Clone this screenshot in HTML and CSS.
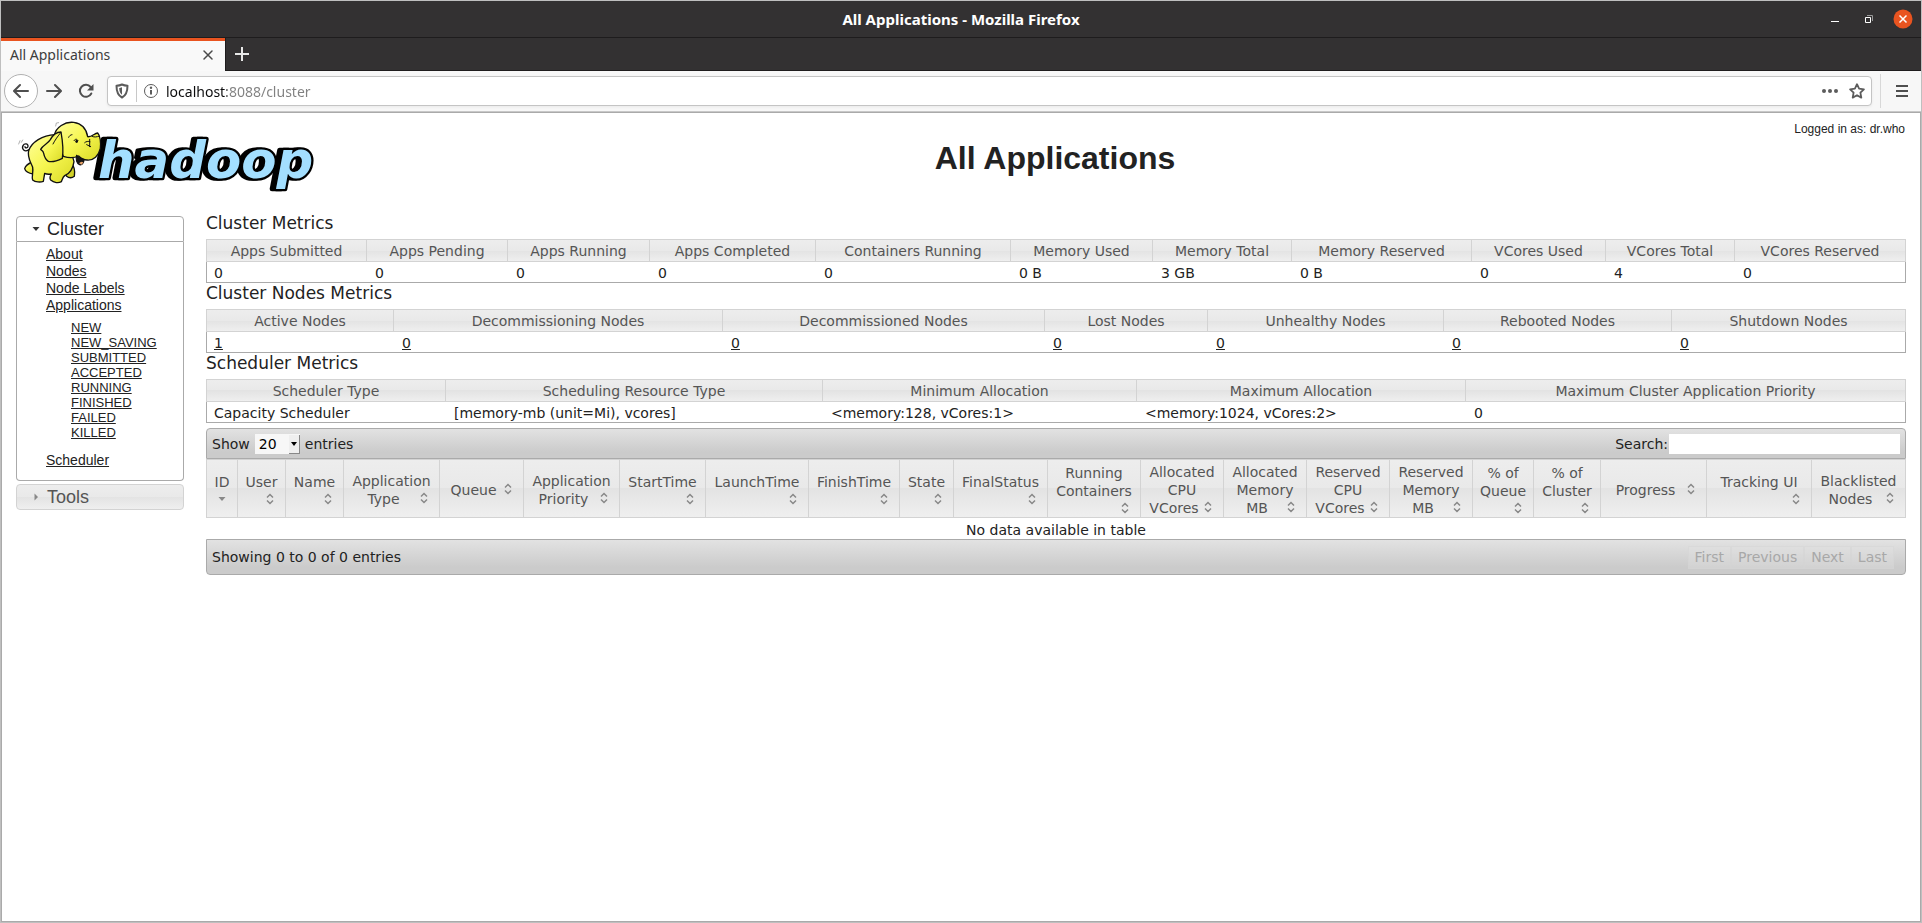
FILE: index.html
```html
<!DOCTYPE html>
<html lang="en">
<head>
  <meta charset="UTF-8">
  <meta name="viewport" content="width=device-width, initial-scale=1.0">
  <title>All Applications</title>
  <link rel="stylesheet" href="styles.css">
</head>
<body>
  <!-- shared icons -->
  <svg class="sprite" width="0" height="0" aria-hidden="true">
    <symbol id="sort-both" viewBox="0 0 16 16">
      <path d="M5 6.5 8 3.5l3 3M5 9.5l3 3 3-3" fill="none" stroke="#888" stroke-width="1.5"/>
    </symbol>
    <symbol id="sort-desc" viewBox="0 0 16 16">
      <path d="M4.5 6h7L8 10z" fill="#888"/>
    </symbol>
  </svg>

  <div class="window">
    <div class="titlebar">
      <span class="window-title">All Applications - Mozilla Firefox</span>
      <div class="window-controls">
        <button type="button" aria-label="Minimize">
          <svg width="20" height="20" viewBox="0 0 20 20"><path d="M6 12.5h8" stroke="#fff"/></svg>
        </button>
        <button type="button" aria-label="Restore">
          <svg width="20" height="20" viewBox="0 0 20 20" fill="none"><path d="M8 6.500h5.500V12" stroke="#999"/><path d="M6.500 8.500h5v5h-5z" stroke="#fff"/></svg>
        </button>
        <button type="button" aria-label="Close">
          <svg width="20" height="20" viewBox="0 0 20 20"><circle cx="10" cy="10" r="9.500" fill="#e95420"/><path d="M6.500 6.500l7 7m0-7l-7 7" stroke="#fff" stroke-width="1.500"/></svg>
        </button>
      </div>
    </div>

    <div class="tabstrip">
      <div class="tab">
        <span>All Applications</span>
        <button type="button" aria-label="Close tab">
          <svg width="12" height="12" viewBox="0 0 12 12"><path d="M2 2l8 8m0-8l-8 8" stroke="#4a4a4a" stroke-width="1.500" stroke-linecap="round"/></svg>
        </button>
      </div>
      <button type="button" class="new-tab" aria-label="New tab">
        <svg width="16" height="16" viewBox="0 0 16 16"><path d="M8 1v14M1 8h14" stroke="#e8e8e8" stroke-width="2"/></svg>
      </button>
    </div>

    <div class="toolbar">
      <button type="button" class="nav-back" aria-label="Back">
        <svg width="16" height="16" viewBox="0 0 16 16"><path d="M15 8H1.500M7 2L1 8l6 6" fill="none" stroke="#4f4f4f" stroke-width="2" stroke-linecap="round" stroke-linejoin="round"/></svg>
      </button>
      <button type="button" class="nav-button" aria-label="Forward">
        <svg width="16" height="16" viewBox="0 0 16 16"><path d="M1 8h13.500M9 2l6 6-6 6" fill="none" stroke="#4f4f4f" stroke-width="2" stroke-linecap="round" stroke-linejoin="round"/></svg>
      </button>
      <button type="button" class="nav-button" aria-label="Reload">
        <svg width="16" height="16" viewBox="0 0 16 16"><path d="M12.600 4A6 6 0 1 0 13.300 10.500" fill="none" stroke="#4f4f4f" stroke-width="2" stroke-linecap="round"/><path d="M15.500 1v6.500H9z" fill="#4f4f4f"/></svg>
      </button>
      <div class="urlbar">
        <svg width="16" height="16" viewBox="0 0 16 16"><path d="M8 1.500c2 1 3.500 1.200 5.500 1.200 0 5.300-.8 9.300-5.500 11.800C3.300 12 2.500 8 2.500 2.700 4.500 2.700 6 2.500 8 1.500z" fill="none" stroke="#5c5c5c" stroke-width="2" stroke-linejoin="round"/><path d="M8 4.300c-1.200.6-2 .7-2.800.8.100 3.200.8 5.200 2.800 6.700z" fill="#5c5c5c"/></svg>
        <span class="urlbar-line"></span>
        <svg width="16" height="16" viewBox="0 0 16 16"><circle cx="8" cy="8" r="6.500" fill="none" stroke="#5c5c5c"/><path d="M8 7v4.500" stroke="#5c5c5c" stroke-width="2"/><circle cx="8" cy="4.700" r="1.200" fill="#5c5c5c"/></svg>
        <input type="text" class="url" aria-label="Address" value="localhost:8088/cluster">
        <svg width="18" height="16" viewBox="0 0 18 16" fill="#5c5c5c"><circle cx="3" cy="8" r="2"/><circle cx="9" cy="8" r="2"/><circle cx="15" cy="8" r="2"/></svg>
        <svg class="star" width="16" height="16" viewBox="0 0 16 16"><path d="M8 1.200l2.100 4.500 4.800.6-3.500 3.400.9 4.900L8 12.200l-4.300 2.400.9-4.900L1.100 6.300l4.800-.6z" fill="none" stroke="#5c5c5c" stroke-width="1.800" stroke-linejoin="round"/></svg>
      </div>
      <span class="toolbar-line"></span>
      <button type="button" class="nav-button" aria-label="Open menu">
        <svg width="14" height="14" viewBox="0 0 14 14"><path d="M1 2h12M1 7h12M1 12h12" stroke="#4f4f4f" stroke-width="2"/></svg>
      </button>
    </div>

    <div class="page">
      <header class="header">
        <svg class="logo" width="320" height="89" viewBox="0 3 960 267" role="img" aria-label="hadoop">
          <defs>
            <linearGradient id="skin" x1="0" y1="0" x2="1" y2="1">
              <stop offset="0" stop-color="#ffff9c"/>
              <stop offset=".5" stop-color="#f6f650"/>
              <stop offset="1" stop-color="#d9d926"/>
            </linearGradient>
          </defs>
          <text class="wordmark" x="264" y="199">hadoop</text>
          <g fill="url(#skin)" stroke="#111" stroke-width="4" stroke-linejoin="round" stroke-linecap="round">
            <path d="M56 113C44 122 34 111 39 101c4-8 16-7 15 2 0 6-9 6-9 1" fill="none"/>
            <path d="M182 152c12 10 13 28 11 41-8 6-18 4-24-1l-10-26z" fill="#d2d228"/>
            <path d="M68 150c-12 4-22 12-24 20 2 8 12 14 26 16z"/>
            <path d="M135 68c-38 2-70 22-79 48-5 20 6 34 12 50 3 13-4 28 0 38 8 7 24 7 32 4l4-24c8 4 14 3 20 2-4 6-5 13-2 18 10 9 24 10 32 5 3-7 4-14 10-18 16-6 25-22 28-42l-20-70z"/>
            <path d="M133 70c4-24 32-42 58-39 22 3 38 18 42 43 12 2 20-10 30-11 8 8 10 30 8 46-5 22-20 37-40 35-8 0-17-4-25-12-14 6-30 6-46 1z"/>
            <path d="M200 130c-3 12 0 24 9 28 7 2 12-5 13-15-9-1-16-6-22-13z" fill="#151515"/>
            <path d="M153 60c-14 0-25 10-32 23-7 12-22 16-29 29 4 5 7 4 9 12 2 10 5 18 14 24 14 4 28-2 42-9 3-18 2-45-4-79z"/>
            <path d="M152 62c-8 10-17 22-23 34M176 76c2-5 6-8 10-8M192 86c4-6 9-6 12 0M224 92c4-4 11-5 16-3M230 98l12 6M239 82v22M246 73c8 4 15 1 20 0" fill="none" stroke-width="3"/>
            <ellipse cx="200" cy="88" rx="4" ry="5" fill="#111" stroke="none"/>
            <path d="M137 42l2-9 7-1M30 86l-4 10M38 84l-4 7" fill="none" stroke="#888" stroke-width="2"/>
          </g>
          <path d="M207 154q7-8 13-3l-5 7z" fill="#e9a36a"/>
        </svg>
        <h1>All Applications</h1>
        <div class="user">Logged in as: dr.who</div>
      </header>

      <div class="layout">
        <nav class="sidebar">
          <h3 class="nav-heading active">
            <button type="button">
              <svg width="16" height="16" viewBox="0 0 16 16"><path d="M4.500 6h7L8 10z" fill="#333"/></svg>
              Cluster
            </button>
          </h3>
          <ul class="nav-list">
            <li><a href="#">About</a></li>
            <li><a href="#">Nodes</a></li>
            <li><a href="#">Node Labels</a></li>
            <li><a href="#">Applications</a>
              <ul class="nav-states">
                <li><a href="#">NEW</a></li>
                <li><a href="#">NEW_SAVING</a></li>
                <li><a href="#">SUBMITTED</a></li>
                <li><a href="#">ACCEPTED</a></li>
                <li><a href="#">RUNNING</a></li>
                <li><a href="#">FINISHED</a></li>
                <li><a href="#">FAILED</a></li>
                <li><a href="#">KILLED</a></li>
              </ul>
            </li>
            <li><a href="#">Scheduler</a></li>
          </ul>
          <h3 class="nav-heading">
            <button type="button">
              <svg width="16" height="16" viewBox="0 0 16 16"><path d="M6.500 4.500v7L10 8z" fill="#888"/></svg>
              Tools
            </button>
          </h3>
        </nav>

        <main class="main">
          <h2>Cluster Metrics</h2>
          <table class="metrics metrics-cluster">
            <thead>
              <tr>
                <th>Apps Submitted</th>
                <th>Apps Pending</th>
                <th>Apps Running</th>
                <th>Apps Completed</th>
                <th>Containers Running</th>
                <th>Memory Used</th>
                <th>Memory Total</th>
                <th>Memory Reserved</th>
                <th>VCores Used</th>
                <th>VCores Total</th>
                <th>VCores Reserved</th>
              </tr>
            </thead>
            <tbody>
              <tr>
                <td>0</td>
                <td>0</td>
                <td>0</td>
                <td>0</td>
                <td>0</td>
                <td>0 B</td>
                <td>3 GB</td>
                <td>0 B</td>
                <td>0</td>
                <td>4</td>
                <td>0</td>
              </tr>
            </tbody>
          </table>

          <h2>Cluster Nodes Metrics</h2>
          <table class="metrics metrics-nodes">
            <thead>
              <tr>
                <th>Active Nodes</th>
                <th>Decommissioning Nodes</th>
                <th>Decommissioned Nodes</th>
                <th>Lost Nodes</th>
                <th>Unhealthy Nodes</th>
                <th>Rebooted Nodes</th>
                <th>Shutdown Nodes</th>
              </tr>
            </thead>
            <tbody>
              <tr>
                <td><a href="#">1</a></td>
                <td><a href="#">0</a></td>
                <td><a href="#">0</a></td>
                <td><a href="#">0</a></td>
                <td><a href="#">0</a></td>
                <td><a href="#">0</a></td>
                <td><a href="#">0</a></td>
              </tr>
            </tbody>
          </table>

          <h2>Scheduler Metrics</h2>
          <table class="metrics metrics-scheduler">
            <thead>
              <tr>
                <th>Scheduler Type</th>
                <th>Scheduling Resource Type</th>
                <th>Minimum Allocation</th>
                <th>Maximum Allocation</th>
                <th>Maximum Cluster Application Priority</th>
              </tr>
            </thead>
            <tbody>
              <tr>
                <td>Capacity Scheduler</td>
                <td>[memory-mb (unit=Mi), vcores]</td>
                <td>&lt;memory:128, vCores:1&gt;</td>
                <td>&lt;memory:1024, vCores:2&gt;</td>
                <td>0</td>
              </tr>
            </tbody>
          </table>

          <div class="bar bar-top">
            <div class="length">
              <label for="length">Show</label>
              <span class="select">
                <select id="length">
                  <option>20</option>
                  <option>40</option>
                  <option>60</option>
                  <option>80</option>
                  <option>100</option>
                </select>
                <span class="select-arrow"></span>
              </span>
              <span>entries</span>
            </div>
            <div class="filter">
              <label for="search">Search:</label>
              <input type="text" id="search">
            </div>
          </div>

          <table class="apps">
            <colgroup>
              <col class="w-id"><col class="w-user"><col class="w-name"><col class="w-type"><col class="w-queue">
              <col class="w-priority"><col class="w-start"><col class="w-launch"><col class="w-finish"><col class="w-state">
              <col class="w-final"><col class="w-containers"><col class="w-resource"><col class="w-resource"><col class="w-resource">
              <col class="w-resource"><col class="w-pct-queue"><col class="w-pct-cluster"><col class="w-progress"><col class="w-tracking">
              <col class="w-blacklist">
            </colgroup>
            <thead>
              <tr>
                <th>ID<svg class="sort"><use href="#sort-desc"/></svg></th>
                <th>User<svg class="sort"><use href="#sort-both"/></svg></th>
                <th>Name<svg class="sort"><use href="#sort-both"/></svg></th>
                <th>Application Type<svg class="sort"><use href="#sort-both"/></svg></th>
                <th>Queue<svg class="sort"><use href="#sort-both"/></svg></th>
                <th>Application Priority<svg class="sort"><use href="#sort-both"/></svg></th>
                <th>StartTime<svg class="sort"><use href="#sort-both"/></svg></th>
                <th>LaunchTime<svg class="sort"><use href="#sort-both"/></svg></th>
                <th>FinishTime<svg class="sort"><use href="#sort-both"/></svg></th>
                <th>State<svg class="sort"><use href="#sort-both"/></svg></th>
                <th>FinalStatus<svg class="sort"><use href="#sort-both"/></svg></th>
                <th>Running Containers<svg class="sort"><use href="#sort-both"/></svg></th>
                <th>Allocated CPU VCores<svg class="sort"><use href="#sort-both"/></svg></th>
                <th>Allocated Memory MB<svg class="sort"><use href="#sort-both"/></svg></th>
                <th>Reserved CPU VCores<svg class="sort"><use href="#sort-both"/></svg></th>
                <th>Reserved Memory MB<svg class="sort"><use href="#sort-both"/></svg></th>
                <th>% of Queue<svg class="sort"><use href="#sort-both"/></svg></th>
                <th>% of Cluster<svg class="sort"><use href="#sort-both"/></svg></th>
                <th>Progress<svg class="sort"><use href="#sort-both"/></svg></th>
                <th>Tracking UI<svg class="sort"><use href="#sort-both"/></svg></th>
                <th>Blacklisted Nodes<svg class="sort"><use href="#sort-both"/></svg></th>
              </tr>
            </thead>
            <tbody>
              <tr>
                <td colspan="21">No data available in table</td>
              </tr>
            </tbody>
          </table>

          <div class="bar bar-bottom">
            <span>Showing 0 to 0 of 0 entries</span>
            <div class="paging">
              <button type="button" disabled>First</button>
              <button type="button" disabled>Previous</button>
              <button type="button" disabled>Next</button>
              <button type="button" disabled>Last</button>
            </div>
          </div>
        </main>
      </div>
    </div>
  </div>
</body>
</html>
```
FILE: styles.css
```css
* {
  box-sizing: border-box;
}
body {
  margin: 0;
  font-family: "DejaVu Sans", sans-serif;
  font-size: 14px;
  color: #222;
}
button {
  display: flex;
  align-items: center;
  justify-content: center;
  padding: 0;
  border: none;
  background: none;
  font: inherit;
  color: inherit;
}
a {
  color: #222;
}
svg {
  display: block;
  flex: none;
}
.sprite {
  position: absolute;
}

/* browser window */
.window {
  display: flex;
  flex-direction: column;
  min-height: 100vh;
  border: 1px solid #bfbfbf;
}
.titlebar,
.tabstrip,
.toolbar {
  display: flex;
  font-family: "Noto Sans", sans-serif;
}
.titlebar {
  position: relative;
  justify-content: center;
  align-items: center;
  height: 37px;
  background: #333132;
  border-bottom: 1px solid #1e1c1d;
  color: #fff;
}
.window-title {
  font-size: 15px;
  font-weight: bold;
}
.window-controls {
  position: absolute;
  right: 8px;
  display: flex;
  gap: 14px;
}
.tabstrip {
  height: 33px;
  background: #333132;
}
.tab {
  display: flex;
  align-items: center;
  justify-content: space-between;
  width: 224px;
  padding: 0 11px 3px 9px;
  background: #f9f9f9;
  border-top: 3px solid #e95420;
  color: #3d3d3d;
}
.new-tab {
  flex: 1;
  justify-content: flex-start;
  padding-left: 8px;
  border-left: 1px solid #1e1c1d;
  border-bottom: 1px solid #1e1c1d;
}
.toolbar {
  align-items: center;
  height: 41px;
  padding: 0 3px;
  background: #f7f7f7;
  border-bottom: 1px solid #c8c8c8;
}
.nav-back {
  width: 34px;
  height: 34px;
  border: 1px solid #b1b1b1;
  border-radius: 50%;
  background: #fff;
}
.nav-button {
  width: 32px;
  height: 32px;
}
.urlbar {
  display: flex;
  align-items: center;
  flex: 1;
  gap: 6px;
  height: 30px;
  margin: 0 8px 0 5px;
  padding: 0 6px;
  background: #fff;
  border: 1px solid #c4c4c4;
  border-radius: 4px;
  box-shadow: 0 1px 3px rgba(0, 0, 0, 0.06);
}
.urlbar-line {
  width: 1px;
  height: 22px;
  background: #c8c8c8;
}
.url {
  flex: 1;
  padding: 0 1px;
  border: none;
  outline: none;
  font-family: "Noto Sans", sans-serif;
  font-size: 14px;
  /* host in black, rest of the address in grey */
  background: linear-gradient(90deg, #0c0c0d 62px, #808080 62px);
  -webkit-background-clip: text;
  background-clip: text;
  color: transparent;
}
.star {
  margin-left: 4px;
}
.toolbar-line {
  width: 1px;
  height: 34px;
  margin-right: 5px;
  background: #d8d8d8;
}

/* page */
.page {
  flex: 1;
  background: #fff;
  border: 1px solid #aaa;
}
.header {
  display: grid;
  grid-template-columns: 204px 1fr;
  height: 100px;
  position: relative;
  font-family: "Liberation Sans", sans-serif;
}
.logo {
  grid-column: 1;
  margin-left: 8px;
}
.wordmark {
  font-family: "DejaVu Sans", sans-serif;
  font-size: 154px;
  font-weight: bold;
  font-style: italic;
  fill: #a3dfff;
  stroke: #000;
  stroke-width: 14px;
  stroke-linejoin: round;
  paint-order: stroke;
  filter: drop-shadow(-12px 0 0 #000);
}
h1 {
  margin: 26px 16px 0 0;
  font-size: 32px;
  line-height: 38px;
  text-align: center;
}
.user {
  position: absolute;
  top: 8px;
  right: 15px;
  font-size: 12px;
  line-height: 16px;
}
.layout {
  display: flex;
  gap: 22px;
  padding: 0 14px;
}

/* sidebar */
.sidebar {
  flex: none;
  width: 168px;
  margin-top: 3px;
  font-family: "Liberation Sans", sans-serif;
}
.nav-heading {
  margin: 3px 0 0;
  font-size: 18px;
  font-weight: normal;
  line-height: 24px;
  color: #555;
  background: linear-gradient(#ededed 0%, #e9e9e9 50%, #e3e3e3 50%, #efefef 100%);
  border: 1px solid #d3d3d3;
  border-radius: 4px;
}
.nav-heading.active {
  margin: 0;
  color: #212121;
  background: #fff;
  border-color: #aaa;
  border-radius: 4px 4px 0 0;
}
.nav-heading button {
  gap: 3px;
  padding-left: 11px;
}
.nav-list {
  margin: 0;
  padding: 4px 0 11px 29px;
  line-height: 17px;
  list-style: none;
  border: 1px solid #aaa;
  border-top: none;
  border-radius: 0 0 4px 4px;
}
.nav-states {
  margin: 6px 0 12px;
  padding-left: 25px;
  font-size: 13px;
  line-height: 15px;
  list-style: none;
}

/* metrics tables */
.main {
  flex: 1;
  min-width: 0;
}
h2 {
  margin: 0;
  font-size: 17px;
  font-weight: normal;
  line-height: 20px;
  padding-bottom: 6px;
}
table {
  width: 100%;
  table-layout: fixed;
  border-spacing: 0;
}
th {
  font-weight: normal;
  color: #555;
  background: linear-gradient(#ededed 0%, #e9e9e9 50%, #e3e3e3 50%, #efefef 100%);
  border: 1px solid #d3d3d3;
  border-left: none;
}
th:first-child {
  border-left: 1px solid #d3d3d3;
}
.metrics th {
  height: 23px;
  padding: 1px 8px 0;
  line-height: 18px;
}
.metrics td {
  height: 21px;
  padding: 2px 8px 0;
  line-height: 18px;
  border-bottom: 1px solid #aaa;
}
.metrics td:first-child {
  padding-left: 7px;
  border-left: 1px solid #aaa;
}
.metrics td:last-child {
  border-right: 1px solid #aaa;
}
.metrics-cluster th:nth-child(1) { width: 161px; }
.metrics-cluster th:nth-child(2) { width: 141px; }
.metrics-cluster th:nth-child(3) { width: 142px; }
.metrics-cluster th:nth-child(4) { width: 166px; }
.metrics-cluster th:nth-child(5) { width: 195px; }
.metrics-cluster th:nth-child(6) { width: 142px; }
.metrics-cluster th:nth-child(7) { width: 139px; }
.metrics-cluster th:nth-child(8) { width: 180px; }
.metrics-cluster th:nth-child(9) { width: 134px; }
.metrics-cluster th:nth-child(10) { width: 129px; }
.metrics-cluster th:nth-child(11) { width: 171px; }

.metrics-nodes th:nth-child(1) { width: 188px; }
.metrics-nodes th:nth-child(2) { width: 329px; }
.metrics-nodes th:nth-child(3) { width: 322px; }
.metrics-nodes th:nth-child(4) { width: 163px; }
.metrics-nodes th:nth-child(5) { width: 236px; }
.metrics-nodes th:nth-child(6) { width: 228px; }
.metrics-nodes th:nth-child(7) { width: 234px; }

.metrics-scheduler th:nth-child(1) { width: 240px; }
.metrics-scheduler th:nth-child(2) { width: 377px; }
.metrics-scheduler th:nth-child(3) { width: 314px; }
.metrics-scheduler th:nth-child(4) { width: 329px; }
.metrics-scheduler th:nth-child(5) { width: 440px; }

/* applications table */
.bar {
  display: flex;
  align-items: center;
  justify-content: space-between;
  padding: 0 5px;
  background: linear-gradient(#e2e2e2, #cbcbcb 80%);
  border: 1px solid #aaa;
}
.bar-top {
  height: 31px;
  margin-top: 5px;
  border-radius: 4px 4px 0 0;
}
.bar-bottom {
  height: 36px;
  border-radius: 0 0 4px 4px;
}
.length {
  display: flex;
  align-items: center;
  gap: 5px;
}
.select {
  position: relative;
  display: flex;
}
.select select {
  width: 45px;
  height: 20px;
  padding: 0 4px;
  appearance: none;
  border: none;
  border-radius: 0;
  background: #f7f7f7;
  font: inherit;
  color: #000;
}
.select-arrow {
  position: absolute;
  top: 1px;
  right: 0;
  display: flex;
  align-items: center;
  justify-content: center;
  width: 11px;
  height: 19px;
  background: #efefef;
  border-right: 1px solid #888;
  border-bottom: 1px solid #888;
  pointer-events: none;
}
.select-arrow::before {
  content: "";
  border: 3px solid transparent;
  border-top: 4px solid #000;
  border-bottom: none;
}
.filter {
  display: flex;
  align-items: center;
  gap: 1px;
}
.filter input {
  width: 231px;
  height: 20px;
  padding: 0 2px;
  border: none;
  background: #fff;
  font: inherit;
}
.apps th {
  height: 59px;
  padding: 2px 7px 0;
  line-height: 18px;
}
.apps td {
  height: 21px;
  padding: 2px 0 0;
  line-height: 18px;
  text-align: center;
}
.sort {
  float: right;
  width: 16px;
  height: 16px;
}
.w-id { width: 32px; }
.w-user { width: 48px; }
.w-name { width: 58px; }
.w-type { width: 96px; }
.w-queue { width: 84px; }
.w-priority { width: 96px; }
.w-start { width: 86px; }
.w-launch { width: 103px; }
.w-finish { width: 91px; }
.w-state { width: 54px; }
.w-final { width: 94px; }
.w-containers { width: 93px; }
.w-resource { width: 83px; }
.w-pct-queue { width: 61px; }
.w-pct-cluster { width: 67px; }
.w-progress { width: 106px; }
.w-tracking { width: 105px; }
.w-blacklist { width: 94px; }
.paging {
  display: flex;
  margin-right: 6px;
}
.paging button {
  height: 23px;
  padding: 0 6px;
  color: #a8a8a8;
  background: rgba(230, 230, 230, 0.3);
  border: 1px solid rgba(211, 211, 211, 0.5);
}
```
